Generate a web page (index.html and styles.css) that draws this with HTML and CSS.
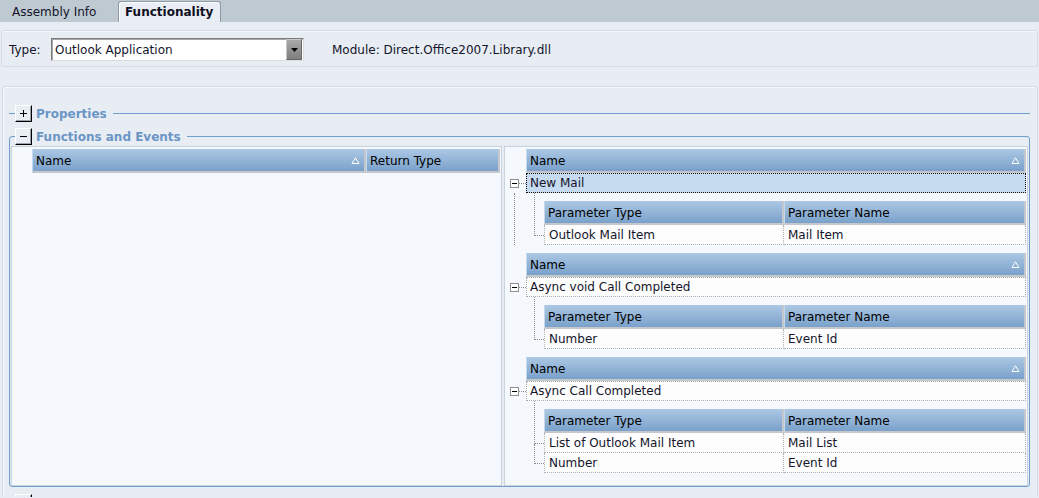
FILE: index.html
```html
<!DOCTYPE html>
<html>
<head>
<meta charset="utf-8">
<title>Functionality</title>
<link rel="stylesheet" href="styles.css">
</head>
<body>
<div class="tabbar">
  <div class="tab tab-info">Assembly Info</div>
  <div class="tab tab-active">Functionality</div>
</div>

<div class="toolbar">
  <span class="lbl">Type:</span>
  <div class="select">
    <span class="sel-text">Outlook Application</span>
    <span class="sel-btn"><svg width="7" height="4" viewBox="0 0 7 4"><polygon points="0,0 7,0 3.5,4" fill="#000"/></svg></span>
  </div>
  <span class="module">Module: Direct.Office2007.Library.dll</span>
</div>

<div class="main">
  <fieldset class="group collapsed">
    <legend><span class="lg"><span class="tbtn"><svg width="9" height="9" viewBox="0 0 9 9"><path d="M1 4.5H8M4.5 1V8" stroke="#000" stroke-width="1"/></svg></span><span class="gtitle">Properties</span></span></legend>
  </fieldset>

  <fieldset class="group open">
    <legend><span class="lg"><span class="tbtn"><svg width="9" height="9" viewBox="0 0 9 9"><path d="M1 4.5H8" stroke="#000" stroke-width="1"/></svg></span><span class="gtitle">Functions and Events</span></span></legend>
    <div class="grids">
      <div class="lgrid">
        <div class="hrow">
          <div class="hcell lname">Name<svg class="sort" width="9" height="7" viewBox="0 0 9 7"><polygon points="1,6.5 4.5,0.8 8,6.5" fill="none" stroke="#fff" stroke-width="1"/></svg></div>
          <div class="hcell lrt">Return Type</div>
        </div>
      </div>

      <div class="rgrid">
        <div class="block">
          <div class="bgutter">
            <div class="gsp"></div>
            <div class="gbox"><svg class="exp" width="9" height="9" viewBox="0 0 9 9"><rect x="0.5" y="0.5" width="8" height="8" fill="#fff" stroke="#8e8e8e"/><path d="M2 4.5H7" stroke="#000"/></svg><span class="hdot"></span></div>
            <div class="gtail"></div>
          </div>
          <div class="bmain">
            <div class="hrow"><div class="hcell full">Name<svg class="sort" width="9" height="7" viewBox="0 0 9 7"><polygon points="1,6.5 4.5,0.8 8,6.5" fill="none" stroke="#fff" stroke-width="1"/></svg></div></div>
            <div class="mrow sel">New Mail</div>
            <div class="detail">
              <div class="dgutter"><div class="dl first"></div></div>
              <div class="ctable">
                <div class="hrow"><div class="hcell pt">Parameter Type</div><div class="hcell pn">Parameter Name</div></div>
                <div class="crow"><div class="cc pt">Outlook Mail Item</div><div class="cc pn">Mail Item</div></div>
              </div>
            </div>
          </div>
        </div>

        <div class="block">
          <div class="bgutter">
            <div class="gsp"></div>
            <div class="gbox"><svg class="exp" width="9" height="9" viewBox="0 0 9 9"><rect x="0.5" y="0.5" width="8" height="8" fill="#fff" stroke="#8e8e8e"/><path d="M2 4.5H7" stroke="#000"/></svg><span class="hdot"></span></div>
          </div>
          <div class="bmain">
            <div class="hrow"><div class="hcell full">Name<svg class="sort" width="9" height="7" viewBox="0 0 9 7"><polygon points="1,6.5 4.5,0.8 8,6.5" fill="none" stroke="#fff" stroke-width="1"/></svg></div></div>
            <div class="mrow">Async void Call Completed</div>
            <div class="detail">
              <div class="dgutter"><div class="dl first"></div></div>
              <div class="ctable">
                <div class="hrow"><div class="hcell pt">Parameter Type</div><div class="hcell pn">Parameter Name</div></div>
                <div class="crow"><div class="cc pt">Number</div><div class="cc pn">Event Id</div></div>
              </div>
            </div>
          </div>
        </div>

        <div class="block">
          <div class="bgutter">
            <div class="gsp"></div>
            <div class="gbox"><svg class="exp" width="9" height="9" viewBox="0 0 9 9"><rect x="0.5" y="0.5" width="8" height="8" fill="#fff" stroke="#8e8e8e"/><path d="M2 4.5H7" stroke="#000"/></svg><span class="hdot"></span></div>
          </div>
          <div class="bmain">
            <div class="hrow"><div class="hcell full">Name<svg class="sort" width="9" height="7" viewBox="0 0 9 7"><polygon points="1,6.5 4.5,0.8 8,6.5" fill="none" stroke="#fff" stroke-width="1"/></svg></div></div>
            <div class="mrow">Async Call Completed</div>
            <div class="detail">
              <div class="dgutter"><div class="dl first"></div><div class="dl"></div></div>
              <div class="ctable">
                <div class="hrow"><div class="hcell pt">Parameter Type</div><div class="hcell pn">Parameter Name</div></div>
                <div class="crow"><div class="cc pt">List of Outlook Mail Item</div><div class="cc pn">Mail List</div></div>
                <div class="crow"><div class="cc pt">Number</div><div class="cc pn">Event Id</div></div>
              </div>
            </div>
          </div>
        </div>
      </div>
    </div>
  </fieldset>

  <fieldset class="group collapsed">
    <legend><span class="lg"><span class="tbtn"><svg width="9" height="9" viewBox="0 0 9 9"><path d="M1 4.5H8M4.5 1V8" stroke="#000" stroke-width="1"/></svg></span></span></legend>
  </fieldset>
</div>
</body>
</html>
```

FILE: styles.css
```css
html, body {
  margin: 0;
  padding: 0;
  overflow: hidden;
}

body {
  width: 1039px;
  height: 498px;
  background: #e8edf4;
  font-family: "DejaVu Sans", Verdana, sans-serif;
  font-size: 12px;
  color: #14142a;
}

/* ---------- tabs ---------- */
.tabbar {
  height: 22px;
  background: #bfc9d2;
  display: flex;
  align-items: flex-end;
}

.tab {
  box-sizing: border-box;
  height: 21px;
  line-height: 22px;
  white-space: nowrap;
}

.tab-info {
  width: 118px;
  padding-left: 12px;
}

.tab-active {
  width: 103px;
  padding-left: 6px;
  line-height: 20px;
  font-weight: bold;
  background: #e9eef5;
  border: 1px solid #8e9aa5;
  border-bottom: none;
  border-radius: 3px 3px 0 0;
  box-shadow: inset 1px 1px 0 #fff;
  color: #0e0e1e;
}

/* ---------- toolbar ---------- */
.toolbar {
  margin: 8px 1px 0 1px;
  height: 37px;
  box-sizing: border-box;
  border: 1px solid #d5dce5;
  border-radius: 2px;
  box-shadow: inset 0 1px 0 #f4f6f9;
  display: flex;
  align-items: center;
  padding-left: 7px;
  padding-top: 2px;
}

.lbl {
  width: 42px;
}

.select {
  width: 253px;
  height: 23px;
  box-sizing: border-box;
  border: 1px solid;
  border-color: #7b7b7b #dcdcdc #dcdcdc #7b7b7b;
  box-shadow: inset 1px 1px 0 #a8a8a8;
  background: #fff;
  display: flex;
  align-items: center;
}

.sel-text {
  flex: 1;
  padding-left: 3px;
}

.sel-btn {
  width: 16px;
  height: 21px;
  box-sizing: border-box;
  margin-right: 1px;
  border: 1px solid #6a6a6a;
  border-top-color: #c8c8c8;
  border-left-color: #c8c8c8;
  background: linear-gradient(#a9a9a9, #7e7e7e);
  display: flex;
  align-items: center;
  justify-content: center;
}

.module {
  margin-left: 28px;
}

/* ---------- main panel ---------- */
.main {
  margin: 19px 1px 0 2px;
  border: 1px solid #d2dae3;
  border-bottom: none;
  border-radius: 3px 3px 0 0;
  box-shadow: inset 1px 1px 0 #f6f8fb;
  padding-top: 18px;
  height: 411px;
  box-sizing: border-box;
  overflow: hidden;
}

.group {
  margin: 0 7px 0 6px;
  padding: 0 1px;
  border: 1px solid #6f9dce;
  border-radius: 3px;
  min-width: 0;
}

.group.collapsed {
  border-width: 1px 0 0 0;
  border-radius: 0;
  padding: 0 1px;
  margin-bottom: 6px;
}

.group legend {
  padding: 0 6px 0 0;
  margin-left: 5px;
}

.group.open legend {
  margin-left: 4px;
}

.group.open {
  margin-bottom: 7px;
  padding-top: 1px;
  box-shadow: inset 1px 0 0 #dfe7f1;
}

.lg {
  display: flex;
  align-items: center;
  height: 17px;
}

.tbtn {
  width: 17px;
  height: 17px;
  box-sizing: border-box;
  border: 1px solid;
  border-color: #ffffff #000000 #000000 #ffffff;
  box-shadow: inset -1px -1px 0 #9aa2ab;
  background: #e9eef5;
  display: flex;
  align-items: center;
  justify-content: center;
}

.gtitle {
  margin-left: 4px;
  font-weight: bold;
  color: #6a95c4;
  white-space: nowrap;
}

/* ---------- grids ---------- */
.grids {
  display: flex;
  gap: 2px;
  height: 340px;
}

.lgrid,
.rgrid {
  box-sizing: border-box;
  border: 1px solid #c9d3de;
  background: #f5f8fc;
  padding-top: 2px;
}

.lgrid {
  width: 491px;
  padding-left: 20px;
  padding-right: 1px;
}

.rgrid {
  flex: 1;
  padding-right: 1px;
}

.hrow {
  display: flex;
}

.hcell {
  height: 24px;
  box-sizing: border-box;
  background: linear-gradient(#acc8e4, #7aa1cb);
  border-left: 1px solid #c7d9ec;
  border-right: 2px solid #c4c7cb;
  border-bottom: 2px solid #c4c7cb;
  padding-left: 3px;
  padding-top: 1px;
  display: flex;
  align-items: center;
  color: #000;
  white-space: nowrap;
}

.sort {
  margin-left: auto;
  margin-right: 4px;
}

.lname {
  width: 334px;
}

.lrt {
  flex: 1;
}

.full {
  flex: 1;
}

/* ---------- tree blocks ---------- */
.block {
  display: flex;
  margin-bottom: 8px;
}

.bgutter {
  width: 21px;
  flex: none;
  display: flex;
  flex-direction: column;
}

.gsp {
  height: 24px;
}

.gbox {
  height: 20px;
  display: flex;
  align-items: center;
}

.exp {
  margin-left: 5px;
  flex: none;
}

.hdot {
  flex: 1;
  height: 0;
  border-top: 1px dotted #8a8a8a;
}

.gtail {
  flex: 1;
  margin-left: 9px;
  border-left: 1px dotted #8a8a8a;
}

.bmain {
  flex: 1;
  min-width: 0;
}

.mrow {
  height: 20px;
  box-sizing: border-box;
  border: 1px dotted #a9a9a9;
  background: #fdfdfe;
  padding-left: 3px;
  line-height: 19px;
  white-space: nowrap;
}

.mrow.sel {
  background: #c7dbf0;
  border-color: #111;
}

.detail {
  display: flex;
}

.dgutter {
  width: 18px;
  flex: none;
}

.dl {
  margin-left: 8px;
  height: 20px;
  box-sizing: border-box;
  border-left: 1px dotted #8a8a8a;
  border-bottom: 1px dotted #8a8a8a;
}

.dl.first {
  height: 43px;
}

.ctable {
  flex: 1;
  margin-top: 8px;
}

.pt {
  width: 240px;
  flex: none;
}

.pn {
  flex: 1;
}

.crow {
  display: flex;
  height: 20px;
  background: #fdfdfe;
}

.cc {
  box-sizing: border-box;
  height: 20px;
  line-height: 20px;
  padding-left: 4px;
  border-right: 1px dotted #b0b0b0;
  border-bottom: 1px dotted #b0b0b0;
  white-space: nowrap;
}

.cc.pt {
  border-left: 1px dotted #b0b0b0;
}
```
